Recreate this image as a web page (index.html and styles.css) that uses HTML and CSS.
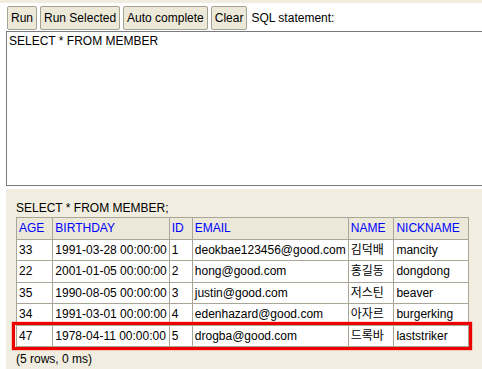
FILE: index.html
```html
<!DOCTYPE html>
<html>
<head>
<meta charset="utf-8">
<link rel="stylesheet" href="styles.css">
</head>
<body>
<div class="topstrip"></div>
<div class="toolbar">
  <button class="btn">Run</button>
  <button class="btn">Run Selected</button>
  <button class="btn">Auto complete</button>
  <button class="btn">Clear</button>
  <span class="label">SQL statement:</span>
</div>
<textarea class="sql">SELECT * FROM MEMBER</textarea>
<div class="result">
  <div class="stmt">SELECT * FROM MEMBER;</div>
  <div class="grid-wrap">
    <table class="grid">
      <tr><th>AGE</th><th>BIRTHDAY</th><th>ID</th><th>EMAIL</th><th>NAME</th><th>NICKNAME</th></tr>
      <tr><td>33</td><td>1991-03-28 00:00:00</td><td>1</td><td>deokbae123456@good.com</td><td>김덕배</td><td>mancity</td></tr>
      <tr><td>22</td><td>2001-01-05 00:00:00</td><td>2</td><td>hong@good.com</td><td>홍길동</td><td>dongdong</td></tr>
      <tr><td>35</td><td>1990-08-05 00:00:00</td><td>3</td><td>justin@good.com</td><td>저스틴</td><td>beaver</td></tr>
      <tr><td>34</td><td>1991-03-01 00:00:00</td><td>4</td><td>edenhazard@good.com</td><td>아자르</td><td>burgerking</td></tr>
      <tr><td>47</td><td>1978-04-11 00:00:00</td><td>5</td><td>drogba@good.com</td><td>드록바</td><td>laststriker</td></tr>
    </table>
    <div class="highlight"></div>
  </div>
  <div class="summary">(5 rows, 0 ms)</div>
</div>
</body>
</html>
```
FILE: styles.css
```css
html, body {
  margin: 0;
  padding: 0;
  overflow: hidden;
  background: #ffffff;
  font-family: "Liberation Sans", Arial, "Noto Sans CJK KR", sans-serif;
  font-size: 12px;
  color: #000;
}
body {
  height: 369px;
  display: flex;
  flex-direction: column;
}
.topstrip {
  height: 3px;
  background: #f0ede0;
  flex: none;
}
.toolbar {
  flex: none;
  display: flex;
  align-items: center;
  gap: 3px;
  padding: 3px 0 0 7px;
  height: 24px;
}
.btn {
  height: 24px;
  margin: 0;
  padding: 0 3px;
  font-family: "Liberation Sans", Arial, sans-serif;
  font-size: 12px;
  color: #000;
  background: #ece9d8;
  border: 1px solid #a5a294;
  border-radius: 2px;
}
.label {
  margin-left: 1px;
  color: #000;
}
.sql {
  flex: none;
  display: block;
  box-sizing: border-box;
  margin: 1px 0 0 6px;
  width: calc(100% - 6px);
  height: 155px;
  padding: 2px;
  border: 1px solid #7a7a7a;
  border-right: none;
  font-family: "Liberation Sans", Arial, sans-serif;
  font-size: 12px;
  line-height: 14px;
  resize: none;
  outline: none;
  color: #000;
}
.result {
  flex: 1;
  margin: 3px 0 0 6px;
  background: #f1eee1;
  padding: 12px 0 0 10px;
}
.stmt {
  line-height: 14px;
  margin-bottom: 2px;
}
.grid-wrap {
  position: relative;
  display: inline-block;
}
.grid {
  border-collapse: collapse;
  background: #fff;
}
.grid th, .grid td {
  border: 1px solid #aaa697;
  line-height: 16.5px;
  text-align: left;
  white-space: nowrap;
  vertical-align: middle;
}
.grid th {
  background: #ebe8da;
  color: #0000ff;
  font-weight: normal;
  padding: 2px 8px 2px 2px;
}
.grid td {
  padding: 2px;
}
.highlight {
  position: absolute;
  left: -4px;
  right: -3px;
  bottom: -3px;
  height: 22px;
  border: 3px solid #ee0000;
  box-shadow: 0 0 1px #ee0000;
  pointer-events: none;
}
.summary {
  margin-top: 2px;
  line-height: 14px;
}
```
